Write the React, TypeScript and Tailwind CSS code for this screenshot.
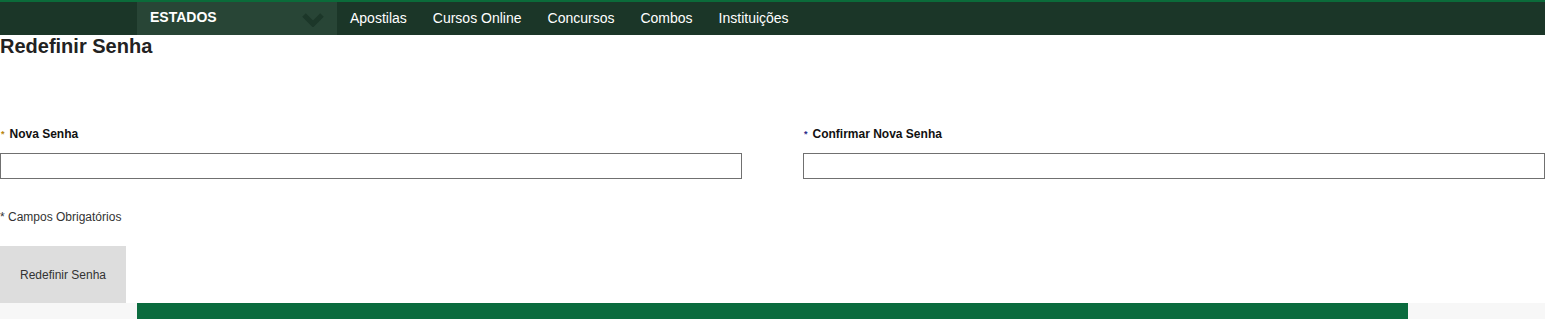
export default function App() {
  const links = ["Apostilas", "Cursos Online", "Concursos", "Combos", "Instituições"];

  return (
    <div className="w-[1545px] h-[319px] bg-white overflow-hidden font-['Liberation_Sans',Arial,sans-serif] text-[#222]">
      {/* barra de navegação */}
      <div className="h-[35px] bg-[#1b3628] border-t-2 border-[#0b6b3a] flex">
        <div className="w-[137px]" />
        <div className="w-[200px] h-full bg-[#284536] flex items-center justify-between pl-[13px] pr-[13px] pb-[2px]">
          <span className="text-white font-bold text-[14px]">ESTADOS</span>
          <svg width="22" height="14" viewBox="0 0 22 14" className="mt-[5px]">
            <path d="M2 2 L11 11 L20 2" fill="none" stroke="#1c3729" strokeWidth="5" />
          </svg>
        </div>
        <nav className="flex items-center pl-[13px] gap-[26px] pb-[2px]">
          {links.map((l) => (
            <a key={l} className="text-white text-[14px] leading-none">
              {l}
            </a>
          ))}
        </nav>
      </div>

      <h1 className="text-[20px] font-bold leading-[20px] text-[#222] mt-[1px]">Redefinir Senha</h1>

      <form className="mt-[71px]">
        <div className="grid grid-cols-2 gap-[61px]">
          <div className="flex flex-col">
            <label className="text-[12px] font-bold leading-[14px] text-[#111]">
              <span className="text-[#b8860b] text-[9px] ml-[1px] mr-[5px] align-top">*</span>Nova Senha
            </label>
            <input type="password" className="mt-[12px] h-[26px] border border-[#707070] outline-none" />
          </div>
          <div className="flex flex-col">
            <label className="text-[12px] font-bold leading-[14px] text-[#111]">
              <span className="text-[#2a2a8a] text-[9px] ml-[1px] mr-[5px] align-top">*</span>Confirmar Nova Senha
            </label>
            <input type="password" className="mt-[12px] h-[26px] border border-[#707070] outline-none" />
          </div>
        </div>

        <p className="mt-[31px] text-[12px] leading-[14px] text-[#333]">* Campos Obrigatórios</p>

        <button type="button" className="mt-[22px] w-[126px] h-[57px] bg-[#dddddd] text-[12px] text-[#333]">
          Redefinir Senha
        </button>
      </form>

      {/* rodapé */}
      <div className="h-[16px] bg-[#f7f7f7] flex">
        <div className="w-[137px]" />
        <div className="w-[1271px] bg-[#0a6b3e]" />
      </div>
    </div>
  );
}
